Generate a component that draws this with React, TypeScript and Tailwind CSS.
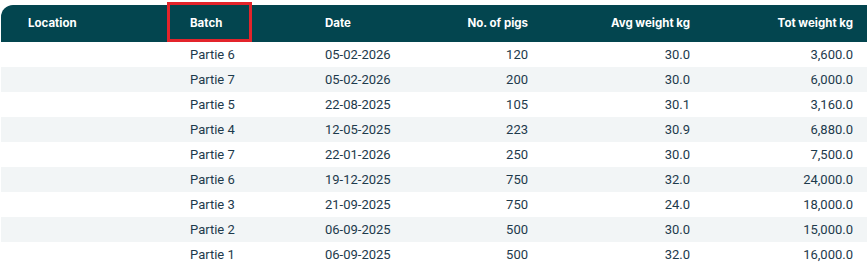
const rows = [
  { batch: "Partie 6", date: "05-02-2026", pigs: "120", avg: "30.0", tot: "3,600.0" },
  { batch: "Partie 7", date: "05-02-2026", pigs: "200", avg: "30.0", tot: "6,000.0" },
  { batch: "Partie 5", date: "22-08-2025", pigs: "105", avg: "30.1", tot: "3,160.0" },
  { batch: "Partie 4", date: "12-05-2025", pigs: "223", avg: "30.9", tot: "6,880.0" },
  { batch: "Partie 7", date: "22-01-2026", pigs: "250", avg: "30.0", tot: "7,500.0" },
  { batch: "Partie 6", date: "19-12-2025", pigs: "750", avg: "32.0", tot: "24,000.0" },
  { batch: "Partie 3", date: "21-09-2025", pigs: "750", avg: "24.0", tot: "18,000.0" },
  { batch: "Partie 2", date: "06-09-2025", pigs: "500", avg: "30.0", tot: "15,000.0" },
  { batch: "Partie 1", date: "06-09-2025", pigs: "500", avg: "32.0", tot: "16,000.0" },
]

const cols = "grid grid-cols-[166px_135px_135px_114px_162px_1fr]"

export default function App() {
  return (
    <div className="h-[267px] w-[867px] overflow-hidden bg-white pl-px pt-[5px]">
      <div className={`${cols} h-[37px] items-center rounded-tl-[12px] bg-[#03454f] text-[11.5px] font-bold text-white [font-family:Inter,'Noto_Sans',sans-serif]`}>
        <div className="pl-[27px]">Location</div>
        <div className="relative flex h-full items-center pl-[23px]">
          Batch
          <span className="absolute -top-[3px] bottom-0 left-0 w-[85px] border-[3px] border-[#e3242b]" />
        </div>
        <div className="pl-[23px]">Date</div>
        <div className="pr-[23px] text-right">No. of pigs</div>
        <div className="pr-[23px] text-right">Avg weight kg</div>
        <div className="pr-[14px] text-right">Tot weight kg</div>
      </div>
      {rows.map((r, i) => (
        <div
          key={i}
          className={`${cols} h-[25px] items-center text-[13px] text-[#1d3a4c] [font-family:Roboto,sans-serif] ${i % 2 ? "bg-[#f2f5f6]" : "bg-white"}`}
        >
          <div />
          <div className="pl-[23px]">{r.batch}</div>
          <div className="pl-[23px]">{r.date}</div>
          <div className="pr-[23px] text-right">{r.pigs}</div>
          <div className="pr-[23px] text-right">{r.avg}</div>
          <div className="pr-[14px] text-right">{r.tot}</div>
        </div>
      ))}
    </div>
  )
}
